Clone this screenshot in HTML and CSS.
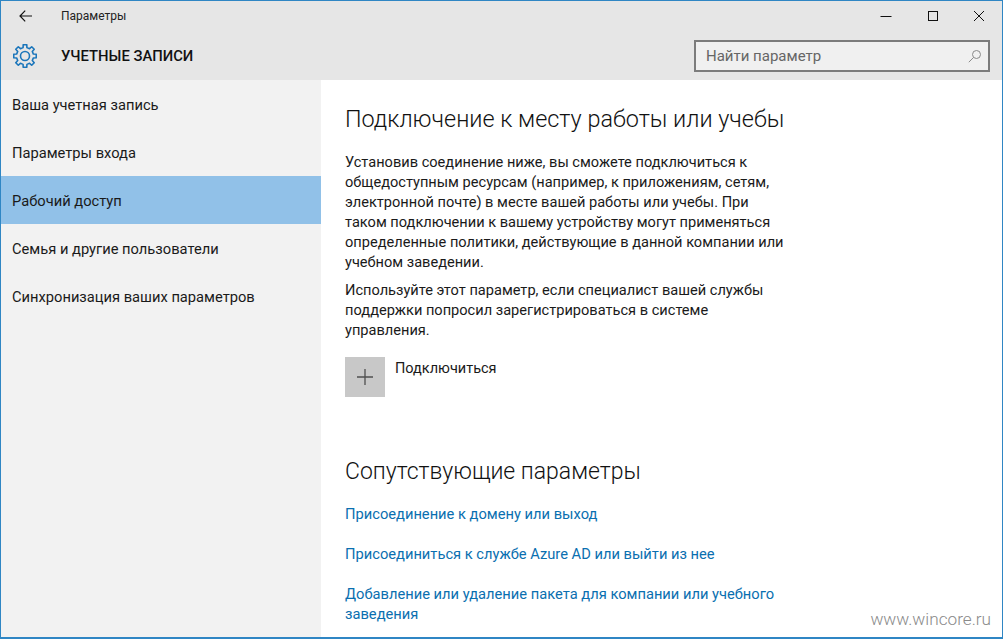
FILE: index.html
```html
<!DOCTYPE html>
<html lang="ru">
<head>
<meta charset="utf-8">
<title>Параметры</title>
<link rel="stylesheet" href="styles.css">
</head>
<body>
<div class="window">
  <header class="top">
    <div class="titlebar">
      <svg class="back" width="13" height="12" viewBox="0 0 13 12"><path d="M6.2.7 1 6l5.2 5.3M1 6h12" fill="none" stroke="#111" stroke-width="1.2"/></svg>
      <span class="app-title">Параметры</span>
      <div class="controls">
        <svg width="12" height="12" viewBox="0 0 12 12"><path d="M.5 6.5h11" stroke="#111" stroke-width="1"/></svg>
        <svg width="12" height="12" viewBox="0 0 12 12"><rect x="1.5" y="1.5" width="9" height="9" fill="none" stroke="#111"/></svg>
        <svg width="12" height="12" viewBox="0 0 12 12"><path d="M1 1l10 10M11 1 1 11" stroke="#111" stroke-width="1"/></svg>
      </div>
    </div>
    <div class="headbar">
      <svg class="gear" width="24" height="24" viewBox="-12 -12 24 24"><g fill="none" stroke="#1b76bb" stroke-width="1.6" stroke-linejoin="round"><path d="M-1.93-8.38-1.78-11.26 1.78-11.26 1.93-8.38 4.56-7.29 6.7-9.22 9.22-6.7 7.29-4.56 8.38-1.93 11.26-1.78 11.26 1.78 8.38 1.93 7.29 4.56 9.22 6.7 6.7 9.22 4.56 7.29 1.93 8.38 1.78 11.26-1.78 11.26-1.93 8.38-4.56 7.29-6.7 9.22-9.22 6.7-7.29 4.56-8.38 1.93-11.26 1.78-11.26-1.78-8.38-1.93-7.29-4.56-9.22-6.7-6.7-9.22-4.56-7.29Z"/><circle r="4.5"/></g></svg>
      <span class="section-title">УЧЕТНЫЕ ЗАПИСИ</span>
      <div class="search">
        <span>Найти параметр</span>
        <svg width="14" height="14" viewBox="0 0 14 14"><circle cx="8.5" cy="5.5" r="4" fill="none" stroke="#8a8a8a"/><path d="M5.6 8.4.8 13.2" stroke="#8a8a8a"/></svg>
      </div>
    </div>
  </header>
  <div class="body">
    <nav class="side">
      <a class="nav-item">Ваша учетная запись</a>
      <a class="nav-item">Параметры входа</a>
      <a class="nav-item active">Рабочий доступ</a>
      <a class="nav-item">Семья и другие пользователи</a>
      <a class="nav-item">Синхронизация ваших параметров</a>
    </nav>
    <main class="content">
      <h1>Подключение к месту работы или учебы</h1>
      <p>Установив соединение ниже, вы сможете подключиться к<br>общедоступным ресурсам (например, к приложениям, сетям,<br>электронной почте) в месте вашей работы или учебы. При<br>таком подключении к вашему устройству могут применяться<br>определенные политики, действующие в данной компании или<br>учебном заведении.</p>
      <p class="second">Используйте этот параметр, если специалист вашей службы<br>поддержки попросил зарегистрироваться в системе<br>управления.</p>
      <div class="connect">
        <div class="plus"><svg width="16" height="16" viewBox="0 0 16 16"><path d="M8 0v16M0 8h16" stroke="#4f4f4f" stroke-width="1.3"/></svg></div>
        <span class="connect-label">Подключиться</span>
      </div>
      <h2>Сопутствующие параметры</h2>
      <a class="link">Присоединение к домену или выход</a>
      <a class="link">Присоединиться к службе Azure AD или выйти из нее</a>
      <a class="link">Добавление или удаление пакета для компании или учебного<br>заведения</a>
    </main>
  </div>
  <div class="watermark">www.wincore.ru</div>
</div>
</body>
</html>
```
FILE: styles.css
```css
* { box-sizing: border-box; }
html, body { margin: 0; height: 100%; }
body { font-family: "Roboto", "Liberation Sans", sans-serif; color: #1a1a1a; background: #fff; overflow: hidden; }
.window { position: relative; height: 639px; border: 1px solid #2f86c4; border-bottom-width: 2px; display: flex; flex-direction: column; overflow: hidden; }
.top { background: #e6e6e6; height: 79px; flex: none; }
.titlebar { height: 30px; display: flex; align-items: center; font-size: 12px; }
.back { margin-left: 18px; }
.app-title { margin-left: 29px; color: #222; }
.controls { margin-left: auto; display: flex; gap: 34.5px; margin-right: 17px; }
.headbar { height: 49px; display: flex; align-items: center; }
.gear { margin-left: 12px; flex: none; }
.section-title { margin-left: 24px; font-size: 14.8px; font-weight: 500; color: #111; }
.search { margin-left: auto; margin-right: 12px; width: 296px; height: 32px; border: 2px solid #7c7c7c; background: #f0f0f0; display: flex; align-items: center; justify-content: space-between; padding: 0 6px 0 10px; font-size: 15px; color: #666; }
.body { flex: 1; display: flex; min-height: 0; }
.side { width: 320px; flex: none; background: #f2f2f2; display: flex; flex-direction: column; }
.nav-item { height: 48px; display: flex; align-items: center; padding: 2px 0 0 11px; font-size: 14.7px; color: #1a1a1a; }
.nav-item.active { background: #91c1e8; }
.content { flex: 1; padding: 23px 0 0 24px; font-size: 14.6px; line-height: 20px; }
h1, h2 { font-weight: 300; line-height: 32px; margin: 0; color: #111; }
h1 { font-size: 23.4px; }
h2 { font-size: 23px; margin-top: 59px; }
p { margin: 17px 0 0; }
p.second { margin-top: 8px; }
.connect { display: flex; align-items: flex-start; gap: 10px; margin-top: 17px; }
.connect-label { padding-top: 2px; font-size: 14.5px; }
.plus { width: 40px; height: 40px; background: #c8c8c8; display: flex; align-items: center; justify-content: center; }
.link { display: block; color: #0a6fb0; font-size: 14.7px; margin-top: 20px; }
h2 + .link { margin-top: 16px; }
.watermark { position: absolute; right: 11px; bottom: 8px; font-size: 17.2px; font-weight: 300; color: #8a8a8a; }
```
